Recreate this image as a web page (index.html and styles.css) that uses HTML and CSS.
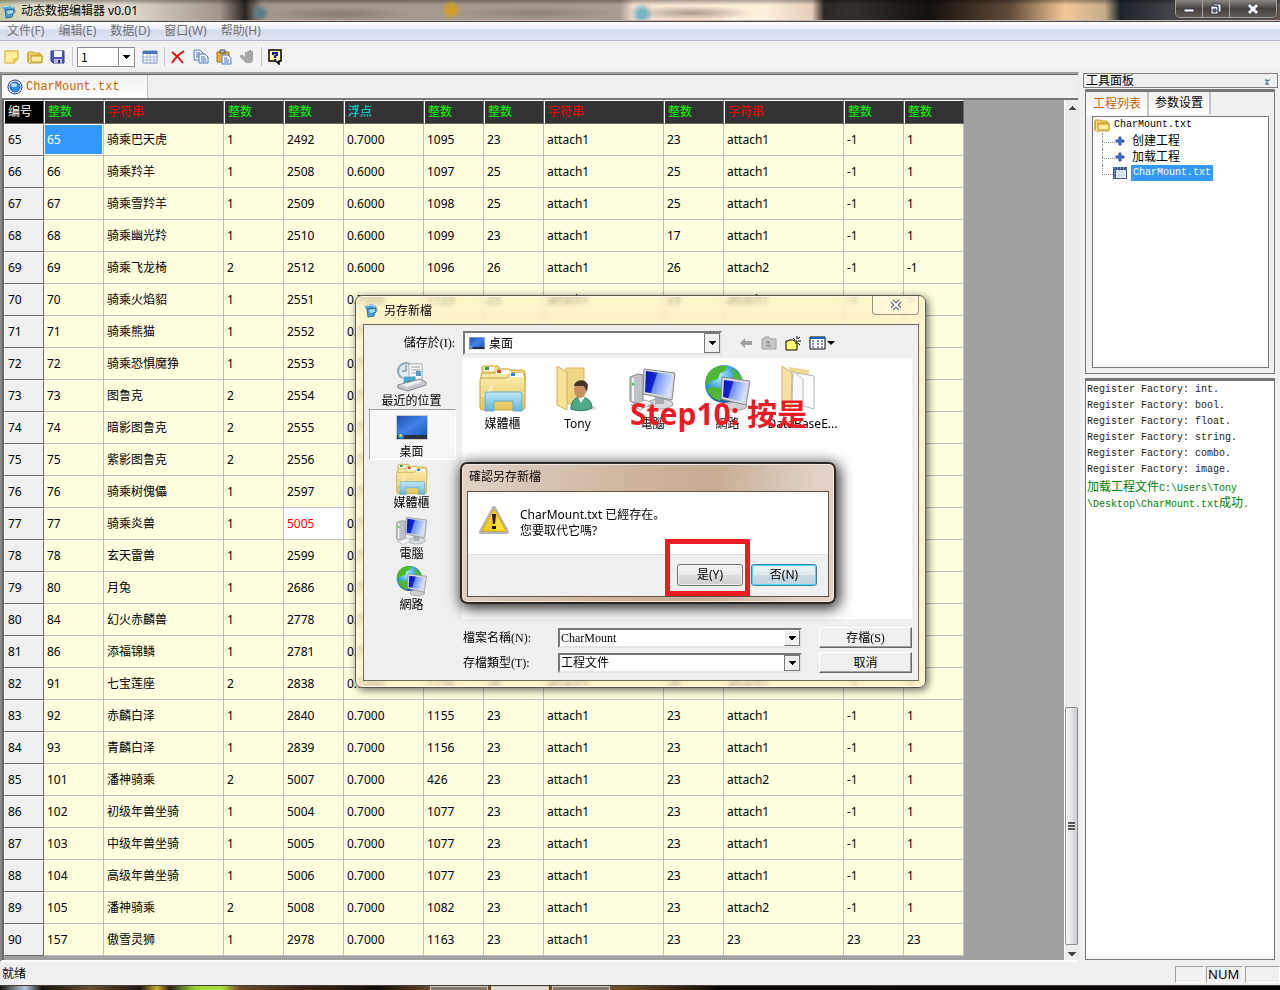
FILE: index.html
```html
<!DOCTYPE html>
<html lang="zh-CN">
<head>
<meta charset="utf-8">
<title>动态数据编辑器 v0.01</title>
<link rel="stylesheet" href="styles.css">
</head>
<body>
<svg class="defs" width="0" height="0" aria-hidden="true">
  <defs>
    <linearGradient id="gBlue" x1="0" y1="0" x2="1" y2="1"><stop offset="0" stop-color="#1d4fb0"/><stop offset=".5" stop-color="#3f83e8"/><stop offset="1" stop-color="#1f56bd"/></linearGradient>
    <linearGradient id="gScreen" x1="0" y1="0" x2="1" y2=".3"><stop offset="0" stop-color="#0a12b8"/><stop offset=".4" stop-color="#1426d2"/><stop offset=".45" stop-color="#6f8ff0"/><stop offset="1" stop-color="#d6e2ff"/></linearGradient>
    <linearGradient id="gFold" x1="0" y1="0" x2="0" y2="1"><stop offset="0" stop-color="#fbeeb0"/><stop offset="1" stop-color="#e6c659"/></linearGradient>
    <linearGradient id="gGlass" x1="0" y1="0" x2="0" y2="1"><stop offset="0" stop-color="#c4e9f6"/><stop offset="1" stop-color="#5fb4dc"/></linearGradient>
    <radialGradient id="gGlobe" cx=".4" cy=".3" r=".8"><stop offset="0" stop-color="#b4ecff"/><stop offset=".5" stop-color="#2f9ad6"/><stop offset="1" stop-color="#0a3c8c"/></radialGradient>
    <symbol id="app" viewBox="0 0 16 16"><path d="M1 4l8-2 5 3-2 2-8 1z" fill="#4b9fd0"/><path d="M4 7l9-1-2 8-6 1z" fill="#4a9fd2" stroke="#2c6f9d"/><path d="M6 8l6-1v3l-5 1z" fill="#a9d8f2"/><path d="M2 4l7-1 3 2" fill="none" stroke="#c7e7f8"/><path d="M13 7q3 1-1 4" fill="none" stroke="#2c6f9d"/></symbol>
    <symbol id="monitor" viewBox="0 0 48 48">
      <path d="M1 13l8-3 5 1v27l-9 1-4-2z" fill="#bfc3c8" stroke="#85898e"/><path d="M4 14v23" stroke="#f4f4f4" stroke-width="2"/><circle cx="4" cy="20" r="1.500" fill="#37d63a"/>
      <ellipse cx="31" cy="40" rx="13" ry="5" fill="#d9dbde" stroke="#9a9da1"/><path d="M26 33h9v7h-9z" fill="#a9adb3"/>
      <path d="M15 5l31 4-3 27-29-6z" fill="#d6d8dc" stroke="#85898e"/><path d="M17 7l27 4-3 22-25-5z" fill="url(#gScreen)"/>
      <path d="M2 41l14-5 8 3-13 7z" fill="#f1f1f1" stroke="#a6a9ad"/>
    </symbol>
    <symbol id="network" viewBox="0 0 48 48">
      <circle cx="20" cy="20" r="19" fill="url(#gGlobe)"/><path d="M5 8c5-6 13-7 18-6l-2 5-5 2-2 6-7 2-5 5c-1-6 0-10 3-14zM27 4c6 3 10 7 12 13l-7 1-4-3 2-4zM8 23l8 1 3 5-3 8c-7-2-11-7-13-12z" fill="#4eb82e"/>
      <ellipse cx="32" cy="42" rx="11" ry="4" fill="#cfd1d4" stroke="#96999d"/><path d="M18 13l28 4-4 24-25-6z" fill="#d9dadd" stroke="#85898e"/><path d="M20 16l23 3-3 19-21-5z" fill="url(#gScreen)"/>
    </symbol>
    <symbol id="library" viewBox="0 0 48 48">
      <path d="M3 9V4q0-2 2-2h14l3 4h21q3 0 3 3v8H3z" fill="#f0dc85" stroke="#c6a33c"/><path d="M2 18v-7q0-2 2-2h12l3-4h12l3 4h9q3 0 3 3v10H2z" fill="#f7e9a8" stroke="#c6a33c"/>
      <path d="M1 16q0-2 2-2h25l3-4h12q3 0 3 3v30q0 3-3 3H4q-3 0-3-3z" fill="url(#gFold)" stroke="#c6a33c"/>
      <path d="M5 3h10v4H5zM17 6h13v4H17zM31 9h13v4H31z" fill="#fff"/><path d="M6 3h4v3H6z" fill="#28a63a"/><path d="M18 6h4v3h-4z" fill="#d8432a"/><path d="M32 9h4v3h-4z" fill="#2a7fe0"/>
      <path d="M3 33l12-13-5 12zM13 17l-1 13 9 1-9 2-1 7-2-7-8-2 8-2z" fill="#fff" opacity=".6"/>
      <path d="M6 47V30q0-2 2-2h33q2 0 2 2v17h-9V37H15v10z" fill="url(#gGlass)" stroke="#62aacb"/>
    </symbol>
    <symbol id="desktop" viewBox="0 0 32 26"><path d="M0 0h32v25H0z" fill="#c8ccd2"/><path d="M1 1h30v20H1z" fill="url(#gBlue)"/><path d="M1 20h30v4H1z" fill="#27323f"/><circle cx="5" cy="21" r="3" fill="#2d8bd2"/><path d="M4 19l2 1-1 2-2-1z" fill="#ffdb4a"/></symbol>
    <symbol id="recent" viewBox="0 0 32 32"><circle cx="10" cy="10" r="8" fill="#dbe8ee" stroke="#91a5b0" stroke-width="2"/><path d="M10 4v6H6" fill="none" stroke="#5d7686"/><path d="M13 3h13v17H13z" fill="#fff" stroke="#a4a8ac"/><path d="M15 6h9M15 9h9M15 12h5" stroke="#8a97a3"/><path d="M20 10h5v5h-5z" fill="#5696c6"/><path d="M7 15h13v10H7z" fill="#48a6d4" stroke="#eee"/><path d="M8 24l5-5 7 5z" fill="#2d8f48"/><path d="M2 24l22-6 6 3v3l-18 6-10-3z" fill="#c4c7cb" stroke="#85898e"/><path d="M4 24l19-5 4 2-16 5z" fill="#eceef0"/></symbol>
    <symbol id="folder16" viewBox="0 0 16 16"><path d="M1 13V4q0-1 1-1h4l2 1h5v3" fill="#f6dc7c" stroke="#c69a1c"/><path d="M3 6h12v7q0 1-1 1H2q-1 0-1-1V4" fill="none" stroke="#c69a1c"/><path d="M4 7h11v6H4z" fill="#fdeca0" stroke="#c69a1c"/></symbol>
    <symbol id="plus" viewBox="0 0 10 10"><path d="M4 1h2v3h3v2H6v3H4V6H1V4h3z" fill="#4679cf" stroke="#2a4e9e"/></symbol>
  </defs>
</svg>

<div class="window">
  <header class="titlebar">
    <svg class="icon16"><use href="#app"/></svg>
    <h1 class="title">动态数据编辑器 v0.01</h1>
    <div class="winbtns">
      <button aria-label="最小化"><svg width="14" height="12"><path d="M2 6h10v3H2z" fill="#fff" stroke="#3a3f55"/></svg></button>
      <button aria-label="还原"><svg width="14" height="12"><path d="M4 1h8v8H9V3H4zM2 3h7v8H2z" fill="#fff" stroke="#3a3f55"/><path d="M4 6h3v3H4z" fill="#777" stroke="#3a3f55"/></svg></button>
      <button class="close" aria-label="关闭"><svg width="14" height="12"><path d="M3 2l8 8M11 2l-8 8" stroke="#3a3f55" stroke-width="5"/><path d="M3 2l8 8M11 2l-8 8" stroke="#fff" stroke-width="3"/></svg></button>
    </div>
  </header>
  <nav class="menubar">
    <button>文件(F)</button><button>编辑(E)</button><button>数据(D)</button><button>窗口(W)</button><button>帮助(H)</button>
  </nav>
  <div class="toolbar">
    <button aria-label="新建"><svg class="icon16"><path d="M1 2h13v8l-4 4H1z" fill="#fff0a0" stroke="#d9a51c"/><path d="M14 10h-4v4" fill="#ffdc66" stroke="#d9a51c"/></svg></button>
    <button aria-label="打开"><svg class="icon16"><use href="#folder16"/></svg></button>
    <button aria-label="保存"><svg class="icon16"><path d="M1 2h13v12H3l-2-2z" fill="#4a55bd" stroke="#2d3796"/><path d="M4 2h8v6H4z" fill="#f4f6ff"/><path d="M4 10h8v4H4z" fill="#b9bedb"/><path d="M8 11h2v3H8z" fill="#222a70"/></svg></button>
    <span class="sep"></span>
    <select class="num" aria-label="编号"><option>1</option></select>
    <button aria-label="表格"><svg class="icon16"><path d="M1 2h14v12H1z" fill="#fff" stroke="#6d92c9"/><path d="M1 2h14v3H1z" fill="#4477bd"/><path d="M1 8h14M1 11h14M5 5v9M8 5v9M12 5v9" stroke="#9cb6dc"/></svg></button>
    <span class="sep"></span>
    <button aria-label="删除"><svg class="icon16"><path d="M2 3c4 3 8 7 11 11M14 2C9 5 5 9 2 14" fill="none" stroke="#d80c0c" stroke-width="2"/></svg></button>
    <button aria-label="复制"><svg class="icon16"><path d="M1 1h6l3 3v7H1z" fill="#e9f1ff" stroke="#527cb8"/><path d="M6 5h6l3 3v6H6z" fill="#e9f1ff" stroke="#527cb8"/><path d="M3 4h4M3 6h3M3 8h3M8 8h4M8 10h5M8 12h5" stroke="#527cb8"/></svg></button>
    <button aria-label="粘贴"><svg class="icon16"><path d="M1 3h12v10H1z" fill="#e3ae3c" stroke="#a1701a"/><path d="M4 1h5v3H4z" fill="#bbb" stroke="#555"/><path d="M6 6h6l3 3v6H6z" fill="#eef4ff" stroke="#527cb8"/><path d="M8 9h3M8 11h5M8 13h5" stroke="#527cb8"/></svg></button>
    <button aria-label="停止"><svg class="icon16"><path d="M6 8V3h2V2h2V1h2v1h2v10l-2 2H7l-6-6V6h3z" fill="#a8a8a8"/></svg></button>
    <span class="sep"></span>
    <button aria-label="帮助"><svg class="icon16"><path d="M2 1h12v11h-2v3l-3-3H2z" fill="#fff9b0" stroke="#000" stroke-width="1.500"/><path d="M6 6V4h4v2L8 7v2M8 10v1" fill="none" stroke="#15158c" stroke-width="2"/></svg></button>
  </div>

  <main class="work">
    <section class="editor">
      <div class="tabs"><button class="tab"><svg class="icon16"><circle cx="8" cy="8" r="7" fill="#fff" stroke="#17348f"/><circle cx="8" cy="8" r="5" fill="#2e8df2" stroke="#1b4fb8"/><ellipse cx="7" cy="6" rx="3" ry="2" fill="#a9dcff"/></svg>CharMount.txt</button></div>
      <div class="gridarea">
        <div class="gridwrap"><table class="grid">
          <colgroup><col class="c40"><col class="c60"><col class="c120"><col class="c60"><col class="c60"><col class="c80"><col class="c60"><col class="c60"><col class="c120"><col class="c60"><col class="c120"><col class="c60"><col class="c60"></colgroup>
          <thead><tr><th class="corner">编号</th><th>整数</th><th class="str">字符串</th><th>整数</th><th>整数</th><th class="flt">浮点</th><th>整数</th><th>整数</th><th class="str">字符串</th><th>整数</th><th class="str">字符串</th><th>整数</th><th>整数</th></tr></thead>
          <tbody id="rows"></tbody>
        </table></div>
        <div class="scroll"><span class="up"></span><span class="space"></span><span class="thumb"><i></i></span><span class="down"></span></div>
      </div>
    </section>

    <aside class="dock">
      <div class="caption"><h2>工具面板</h2><svg width="6" height="8"><path d="M0 3h2v4M0 7h4M2 4q1-1 3-1" fill="none" stroke="#1f5c85"/></svg></div>
      <div class="panel">
        <div class="ptabs"><button class="on">工程列表</button><button>参数设置</button></div>
        <div class="tree">
          <div class="root"><svg class="icon16"><use href="#folder16"/></svg><span class="mono">CharMount.txt</span></div>
          <ul>
            <li><svg class="icon10"><use href="#plus"/></svg><span>创建工程</span></li>
            <li><svg class="icon10"><use href="#plus"/></svg><span>加载工程</span></li>
            <li class="file"><svg class="icon14" viewBox="0 0 14 12"><path d="M0 0h14v12H0z" fill="#40598f"/><path d="M3 3h10v8H3z" fill="#f0f4ff"/><path d="M3 5h10M3 8h10M6 3v8M9 3v8" stroke="#c3cee8"/><path d="M1 1h1M4 1h1M7 1h1M10 1h1M1 4h1M1 7h1M1 10h1" stroke="#c3cee8"/></svg><span class="mono sel">CharMount.txt</span></li>
          </ul>
        </div>
      </div>
      <div class="log">
        <p>Register Factory: int.</p><p>Register Factory: bool.</p><p>Register Factory: float.</p><p>Register Factory: string.</p><p>Register Factory: combo.</p><p>Register Factory: image.</p>
        <p class="ok"><span class="han">加载工程文件</span>C:\Users\Tony</p><p class="ok">\Desktop\CharMount.txt<span class="han">成功</span>.</p>
      </div>
    </aside>
  </main>

  <footer class="status"><span class="ready">就绪</span><span class="box"></span><span class="box numlock">NUM</span><span class="box last"></span></footer>
  <div class="taskbar"><span></span><span class="lit"></span><span></span></div>
</div>

<section class="save" role="dialog" aria-label="另存新檔">
  <header class="savehead"><svg class="icon16"><use href="#app"/></svg><h2>另存新檔</h2><button aria-label="關閉"><svg width="14" height="12"><path d="M3 2l8 8M11 2l-8 8" stroke="#555b66" stroke-width="4"/><path d="M3 2l8 8M11 2l-8 8" stroke="#fff" stroke-width="2"/></svg></button></header>
  <div class="savebody">
    <div class="lookrow">
      <label for="look">儲存於(I):</label>
      <div class="lookbox"><svg width="16" height="13"><use href="#desktop"/></svg><select id="look"><option>桌面</option></select></div>
      <div class="looktools">
        <button aria-label="返回"><svg width="14" height="12"><path d="M1 6l5-5v3h7v4H6v3z" fill="#a0a0a0"/></svg></button>
        <button aria-label="上一層"><svg width="16" height="14"><path d="M1 3h2l1-2h4l1 2h6v10H1z" fill="#c7c7c7" stroke="#a0a0a0"/><path d="M5 10h5M7 10V6M5 7l2-2 2 2" fill="none" stroke="#888"/></svg></button>
        <button aria-label="新資料夾"><svg width="16" height="16"><path d="M1 6h2l1-1h4l1 1h3v9H1z" fill="#ffff70" stroke="#000"/><path d="M12 1v3M10 5L8 3M15 2l-2 2M13 6h3M13 8l2 2M11 7v2" stroke="#000"/></svg></button>
        <button aria-label="檢視"><svg width="26" height="14"><path d="M1 1h15v12H1z" fill="#fff" stroke="#000"/><path d="M1 1h15v2H1z" fill="#1d60b5"/><path d="M3 5h2M8 5h2M12 5h2M3 8h2M8 8h2M12 8h2M3 11h2M8 11h2M12 11h2" stroke="#15156c"/><path d="M18 5h8l-4 4z" fill="#000"/></svg></button>
      </div>
    </div>
    <div class="browse">
      <nav class="places">
        <button><svg width="32" height="32"><use href="#recent"/></svg>最近的位置</button>
        <button class="on"><svg width="32" height="32"><use href="#desktop"/></svg>桌面</button>
        <button><svg width="32" height="32"><use href="#library"/></svg>媒體櫃</button>
        <button><svg width="32" height="32"><use href="#monitor"/></svg>電腦</button>
        <button><svg width="32" height="32"><use href="#network"/></svg>網路</button>
      </nav>
      <div class="files">
        <div class="item"><svg width="48" height="48"><use href="#library"/></svg>媒體櫃</div>
        <div class="item"><svg width="48" height="48" viewBox="0 0 48 48"><path d="M12 4h18v36H12z" fill="#eed684" stroke="#d7bb62"/><path d="M3 2l10 6v38L3 41z" fill="#f7e39a" stroke="#d0b055"/><ellipse cx="29" cy="44" rx="14" ry="3" fill="#ddd"/><path d="M17 45c0-8 4-12 10-12s11 4 11 11q-10 5-21 1z" fill="#4fa987" stroke="#2c7d60"/><path d="M24 33l3 6 4-6z" fill="#fff"/><ellipse cx="26" cy="26" rx="6" ry="8" fill="#c98f64"/><path d="M20 22c1-7 12-8 14-1l-1 7-3-6z" fill="#46352b"/></svg>Tony</div>
        <div class="item"><svg width="48" height="48"><use href="#monitor"/></svg>電腦</div>
        <div class="item"><svg width="48" height="48"><use href="#network"/></svg>網路</div>
        <div class="item"><svg width="48" height="48" viewBox="0 0 48 48"><path d="M10 3l20 3v8H10z" fill="#f0d991"/><path d="M17 9l18 3v33l-18-5z" fill="#fff" stroke="#b9b9b9"/><path d="M14 7l10 8v27l-11-2z" fill="#f9f9f9" stroke="#bbb"/><path d="M3 2l10 7-1 35-9-4z" fill="#f6e3a3" stroke="#d3b869"/></svg>DataBaseE...</div>
      </div>
    </div>
    <div class="fields">
      <label for="fname">檔案名稱(N):</label><div class="combo"><input id="fname" value="CharMount"><button class="drop" aria-label="展開"></button></div><button class="classic">存檔(S)</button>
      <label for="ftype">存檔類型(T):</label><select id="ftype" class="combo"><option>工程文件</option></select><button class="classic">取消</button>
    </div>
  </div>

  <p class="step">Step10: 按是</p>

  <section class="confirm" role="alertdialog" aria-label="確認另存新檔">
    <h2>確認另存新檔</h2>
    <div class="cbody">
      <div class="msg"><svg width="32" height="30" viewBox="0 0 32 30"><path d="M16 3l13 24H3z" fill="#f8d312" stroke="#b4b4b4" stroke-width="4" stroke-linejoin="round"/><path d="M16 4l12 22H4z" fill="#ffe034" stroke="#e2a90c" stroke-linejoin="round"/><path d="M16 4l4 8-8 14H4z" fill="#f2b507" opacity=".5"/><path d="M14 9h4l-1 10h-2zM14 21h4v3h-4z" fill="#1a1a1a"/></svg>
        <p>CharMount.txt 已經存在。<br>您要取代它嗎?</p></div>
      <div class="cbtns"><button>是(Y)</button><button class="def">否(N)</button></div>
    </div>
    <span class="mark"></span>
  </section>
</section>
<script src="app.js"></script>
</body>
</html>
```

FILE: styles.css
```css
* { box-sizing: border-box; }
body { margin: 0; position: relative; font: 12px/16px "Noto Sans", "Noto Sans CJK SC", sans-serif; color: #000; }
button, input, select { font: inherit; color: inherit; }
button { border: 0; padding: 0; background: none; }
h1, h2, p, ul { margin: 0; padding: 0; font-size: 12px; font-weight: normal; }
svg { flex: none; }
.defs { position: absolute; }
.icon16 { width: 16px; height: 16px; }
.icon14 { width: 14px; height: 12px; }
.icon10 { width: 10px; height: 10px; }
.mono { font-family: "Liberation Mono", "Noto Sans CJK SC", monospace; font-size: 10px; }

.window { display: flex; flex-direction: column; min-height: 100vh; background: #f0f0f0; }
.titlebar {
  display: flex; align-items: center; height: 22px; padding-left: 1px; gap: 4px;
  border-bottom: 1px solid #4b4441;
  box-shadow: inset 0 -1px #c9bdb5;
  background:
    radial-gradient(circle at 260px 13px, #5c7b8b 0 3px, transparent 9px),
    radial-gradient(circle at 451px 10px, #d19e2a 0 4px, transparent 10px),
    radial-gradient(ellipse 70px 7px at 340px 14px, #857a72, transparent),
    radial-gradient(ellipse 85px 7px at 535px 13px, #8d8279, transparent),
    radial-gradient(circle at 642px 14px, #79b4c6 0 4px, transparent 11px),
    radial-gradient(ellipse 60px 7px at 692px 13px, #ab9b8e, transparent),
    linear-gradient(#0005, transparent 5px),
    linear-gradient(90deg, #c8c9a0, #e4dfcd 30px, #dfd9cd 130px, #a1958b 220px, #2a2421 245px, #a3978d 262px, #a99d93 620px, #f4dfcc 634px, #fcf1dc 765px, #e6cdb9 812px, #2c2724 824px, #34302d 850px, #15100d 930px, #614b39 1010px, #f3c898 1065px, #c5ab8b 1105px, #1b2329 1120px, #4a4b50 1180px, #625750 100%);
}
.title { flex: 1; line-height: 20px; }
.winbtns { display: flex; align-self: flex-start; margin-right: 3px; border: 1px solid #a8a29c; border-top: 0; border-radius: 0 0 5px 5px; overflow: hidden; box-shadow: 0 0 0 1px #3338; }
.winbtns button { display: flex; justify-content: center; align-items: center; width: 27px; height: 17px; background: linear-gradient(#8a8683, #46413e 50%, #605955); border-right: 1px solid #aaa39d; }
.winbtns .close { width: 46px; border-right: 0; }
.menubar { display: flex; height: 19px; background: linear-gradient(#fff, #e9edf7 7px, #d5dbed 8px, #dfe4f6); border-bottom: 1px solid #b4bad0; color: #707070; }
.menubar button { padding: 0 7px; }
.toolbar { display: flex; align-items: center; height: 31px; padding: 0 4px; gap: 7px; background: #f3f3f3; border-top: 3px solid #f0f0f0; border-bottom: 3px solid #f0f0f0; }
.toolbar button { height: 16px; width: 16px; }
.sep { width: 1px; height: 19px; margin: 0 -2px 0 -1px; background: #c5c5c5; }
select {
  appearance: none; border: 1px solid #8c8c8c; border-radius: 0; padding: 0 3px;
}
.num {
  width: 58px; height: 20px; margin-left: -1px; font-family: "Noto Sans CJK SC", sans-serif;
  background:
    conic-gradient(from -45deg at 50% 100%, #000 90deg, transparent 0) right 4px center / 8px 4px no-repeat,
    linear-gradient(#8c8c8c, #8c8c8c) right 15px center / 1px 100% no-repeat, #fff;
}

.work { display: flex; flex: 1; min-height: 0; gap: 4px; }
.editor { flex: 1; min-width: 0; display: flex; flex-direction: column; border: solid; border-color: #a0a0a0 #e8e8e8 #fff #888; border-width: 2px 1px 2px 2px; box-shadow: inset 0 1px #696969; margin-bottom: 1px; }
.tabs { height: 24px; padding-top: 1px; }
.tab { display: flex; align-items: center; gap: 3px; height: 23px; width: 146px; padding-left: 5px; border-right: 1px solid #c3c3c3; background: linear-gradient(#f0f0f0, #fff); color: #c86400; font: 12px "Liberation Mono", monospace; }
.gridarea { flex: 1; display: flex; border-top: 2px solid #777; border-left: 2px solid #696969; background: #a0a0a0; }
.gridwrap { flex: 1; }
.grid { width: 960px; table-layout: fixed; border-collapse: separate; border-spacing: 0; }
.c40 { width: 40px; }
.c60 { width: 60px; }
.c80 { width: 80px; }
.c120 { width: 120px; }
.grid th, .grid td { padding: 0 0 0 3px; text-align: left; font-weight: normal; white-space: nowrap; overflow: hidden; }
.grid thead th { height: 24px; background: #333; color: #0f0; border: 1px solid; border-color: #fff #696969 #696969 #fff; }
.grid thead .str { color: #f00; }
.grid thead .flt { color: #00e5e5; }
.grid thead .corner { background: #000; color: #fff; }
.grid tbody th { height: 32px; background: #f0f0f0; border: 1px solid; border-color: #fff #696969 #696969 #fff; }
.grid td { height: 32px; background: #ffffdf; border-right: 1px solid #c0c0c0; border-bottom: 1px solid #c0c0c0; }
.grid .picked { background: #3399ff; color: #fff; box-shadow: inset 0 0 0 1px #fff; }
.grid .changed { background: #fff; color: #f00; }
.scroll { display: flex; flex-direction: column; width: 14px; background: #ececec; border-left: 1px solid #fff; align-items: center; }
.up, .down { height: 15px; width: 8px; }
.up { background: conic-gradient(from 135deg at 50% 0, #444 90deg, transparent 0) 0 6px / 8px 4px no-repeat; }
.down { background: conic-gradient(from -45deg at 50% 100%, #444 90deg, transparent 0) 0 7px / 8px 4px no-repeat; }
.space { flex: 592; }
.thumb { flex: 236; width: 100%; display: flex; align-items: center; justify-content: center; border: 1px solid #8e8e8e; border-radius: 2px; background: linear-gradient(90deg, #f8f8f8, #e4e4e6 50%, #c9cad0); }
.thumb i { width: 7px; height: 8px; background: repeating-linear-gradient(#555 0 2px, #eee 2px 3px); }

.dock { width: 197px; display: flex; flex-direction: column; padding: 1px 5px 3px 2px; }
.caption { display: flex; justify-content: space-between; align-items: center; height: 15px; margin: 0 -3px 0 -2px; padding: 0 6px 0 2px; border: 1px solid #7f7f7f; }
.panel { height: 285px; border: 1px solid #777; border-top-width: 3px; padding: 0 5px 5px 6px; display: flex; flex-direction: column; margin-top: 1px; }
.ptabs { display: flex; height: 24px; margin-left: -5px; }
.ptabs button { width: 62px; height: 22px; background: linear-gradient(#f0f0f0, #fff); border-right: 2px solid #c3c3c3; }
.ptabs .on { height: 24px; color: #c86400; }
.tree { flex: 1; background: #fff; border: 1px solid #777; padding: 0 1px; }
.root, .tree li { display: flex; align-items: center; height: 16px; gap: 4px; }
.tree ul { list-style: none; margin-left: 8px; }
.tree li { position: relative; padding-left: 13px; gap: 7px; }
.tree li::before { content: ""; position: absolute; left: 0; top: 0; width: 12px; height: 9px; border: dotted #888; border-width: 0 0 1px 1px; }
.tree li:not(:last-child)::after { content: ""; position: absolute; left: 0; top: 8px; height: 8px; border-left: 1px dotted #888; }
.tree .file { padding-left: 11px; gap: 4px; }
.sel { background: #3399ff; color: #fff; padding: 0 2px; }
.log { flex: 1; margin-top: 4px; padding: 1px; background: #fff; border: 1px solid #777; border-top-width: 3px; }
.log p { height: 16px; font: 10px/16px "Liberation Mono", monospace; color: #222; white-space: nowrap; }
.log .ok { color: #008000; }
.han { font-family: "Noto Sans CJK SC", sans-serif; font-size: 12px; }

.status { display: flex; align-items: center; height: 22px; padding-left: 2px; gap: 2px; }
.ready { flex: 1; }
.box { width: 29px; height: 17px; border: 1px solid; border-color: #a0a0a0 #fff #fff #a0a0a0; }
.numlock { width: 37px; padding-left: 1px; font-size: 13px; line-height: 15px; }
.last { width: 35px; }
.taskbar { display: flex; gap: 3px; height: 5px; padding-left: 430px; border-top: 1px solid #443c36; background: linear-gradient(90deg, #1a1510, #b5cbe0 25px, #14100c 42px, #6b5030 90px, #1a1510 140px, #c6b02b 157px, #2a2014 170px, #9cd635 195px, #a7e03a 222px, #6b4a25 240px, #3c2917 300px, #120d09 380px, #6b4b28 430px, #705026 620px, #0d0907 720px, #050404 100%); }
.taskbar span { width: 58px; background: #85796f; border: 1px solid #d0c7bc; border-bottom: 0; }
.taskbar .lit { background: #e2ddd6; }

.save {
  position: absolute; left: 355px; top: 295px; width: 571px; padding: 0 6px 6px 7px;
  border: 1px solid #59554a; border-radius: 7px; background: #fff0c0a8; backdrop-filter: blur(2px);
  box-shadow: inset 0 0 0 1px #fffbe6, 2px 2px 8px #0009;
  font-family: "Noto Sans CJK TC", sans-serif;
}
.savehead { display: flex; height: 28px; gap: 5px; align-items: center; }
.savehead h2 { flex: 1; }
.savehead button { align-self: flex-start; display: flex; justify-content: center; align-items: center; width: 47px; height: 19px; border: 1px solid #9b9480; border-top: 0; border-radius: 0 0 4px 4px; background: #fff4; }
.savebody { background: #f0f0f0; border: 1px solid #6d6a5d; padding: 6px 6px 7px 5px; }
.lookrow { display: flex; height: 24px; align-items: center; }
.lookrow label { width: 94px; padding-right: 8px; text-align: right; font-family: "Liberation Serif", "Noto Sans CJK TC", serif; }
.lookbox { display: flex; align-items: center; width: 259px; height: 24px; padding-left: 4px; background: #fff; border: 2px solid; border-color: #777 #e5e5e5 #e5e5e5 #777; }
.lookbox select { flex: 1; height: 20px; border: 0; padding-left: 4px; }
.lookbox select, select.combo {
  background:
    conic-gradient(from -45deg at 50% 100%, #000 90deg, transparent 0) right 4px center / 8px 4px no-repeat,
    linear-gradient(#f0f0f0, #f0f0f0) right 1px center / 14px calc(100% - 2px) no-repeat,
    linear-gradient(#777, #777) right center / 16px 100% no-repeat, #fff;
}
.looktools { display: flex; align-items: center; gap: 8px; margin-left: 17px; height: 16px; }
.looktools button { height: 16px; display: flex; align-items: center; }
.browse { display: flex; gap: 6px; margin-top: 3px; }
.places { display: flex; flex-direction: column; width: 87px; }
.places button { display: flex; flex-direction: column; align-items: center; height: 51px; padding: 2px 2px 0 0; line-height: 14px; border: 1px solid transparent; }
.places .on { background: repeating-conic-gradient(#fff 0 25%, #f0f0f0 0 50%) 0 0 / 2px 2px; border-color: #a0a0a0 #fff #fff #a0a0a0; }
.files { flex: 1; display: flex; height: 261px; background: #fff; padding: 6px 0 0 3px; }
.item { width: 75px; text-align: center; line-height: 16px; font-family: "Noto Sans", "Noto Sans CJK TC", sans-serif; }
.item svg { display: block; margin: 0 auto 4px; }
.fields { display: grid; grid-template-columns: 95px 261px 93px; row-gap: 4px; justify-content: end; align-items: center; margin-top: 8px; font-family: "Liberation Serif", "Noto Sans CJK TC", serif; }
.combo { display: flex; width: 244px; height: 20px; background: #fff; border: 2px solid; border-color: #777 #e5e5e5 #e5e5e5 #777; }
.combo input { flex: 1; min-width: 0; border: 0; padding: 0 1px; background: none; }
select.combo { padding: 0 1px; }
.drop { width: 16px; border: 1px solid #777; border-color: #fff #777 #777 #fff; background: conic-gradient(from -45deg at 50% 100%, #000 90deg, transparent 0) center / 8px 4px no-repeat #f0f0f0; }
.classic { height: 21px; background: #f0f0f0; border: 1px solid; border-color: #fff #696969 #696969 #fff; box-shadow: inset -1px -1px #a0a0a0; }

.step { position: absolute; left: 274px; top: 98px; font: bold 30px/40px "Noto Sans", "Noto Sans CJK TC", sans-serif; color: #ed1c24; white-space: nowrap; }
.confirm {
  position: absolute; left: 104px; top: 166px; width: 376px; padding: 0 5px 5px;
  border: 2px solid #2c2622; border-radius: 7px; background: linear-gradient(100deg, #e2d2c5, #cdb39c 45%, #c8ad95 65%, #e1d2c5 90%);
  box-shadow: inset 0 0 0 1px #f2e8df, 2px 3px 14px 2px #000c;
  font-family: "Noto Sans", "Noto Sans CJK TC", sans-serif;
}
.confirm h2 { line-height: 26px; height: 27px; padding-left: 2px; }
.cbody { border: 1px solid #5e5249; background: #f0f0f0; }
.msg { display: flex; gap: 10px; height: 63px; padding: 13px 10px 0; background: #fff; border-bottom: 1px solid #dfdfdf; }
.msg p { padding-top: 2px; }
.cbtns { display: flex; justify-content: flex-end; gap: 8px; padding: 9px 11px 10px; }
.cbtns button { width: 66px; height: 22px; border: 1px solid #707070; border-radius: 3px; background: linear-gradient(#f2f2f2, #ebebeb 50%, #ddd 50%, #cfcfcf); box-shadow: inset 0 0 0 1px #fffa; }
.cbtns .def { border-color: #3c7fb1; box-shadow: inset 0 0 0 1px #48d8fb; background: linear-gradient(#eef5f8, #dce9ef 50%, #c8dae4 50%, #c3d5e0); }
.mark { position: absolute; left: 203px; top: 75px; width: 85px; height: 57px; border: 5px solid #ed1c24; pointer-events: none; }
```

FILE: app.js
```js
const data = `65|65|骑乘巴天虎|1|2492|0.7000|1095|23|attach1|23|attach1|-1|1
66|66|骑乘羚羊|1|2508|0.6000|1097|25|attach1|25|attach1|-1|1
67|67|骑乘雪羚羊|1|2509|0.6000|1098|25|attach1|25|attach1|-1|1
68|68|骑乘幽光羚|1|2510|0.6000|1099|23|attach1|17|attach1|-1|1
69|69|骑乘飞龙椅|2|2512|0.6000|1096|26|attach1|26|attach2|-1|-1
70|70|骑乘火焰貂|1|2551|0.7000|1123|23|attach1|23|attach1|-1|1
71|71|骑乘熊猫|1|2552|0.7000
72|72|骑乘恐惧魔狰|1|2553|0.7000
73|73|图鲁克|2|2554|0.7000
74|74|暗影图鲁克|2|2555|0.7000
75|75|紫影图鲁克|2|2556|0.7000
76|76|骑乘树傀儡|1|2597|0.7000
77|77|骑乘炎兽|1|5005|0.7000
78|78|玄天雷兽|1|2599|0.7000
79|80|月兔|1|2686|0.7000
80|84|幻火赤麟兽|1|2778|0.7000
81|86|添福锦鳞|1|2781|0.7000
82|91|七宝莲座|2|2838|0.7000|1156|26|attach1|26|attach1|-1|1
83|92|赤麟白泽|1|2840|0.7000|1155|23|attach1|23|attach1|-1|1
84|93|青麟白泽|1|2839|0.7000|1156|23|attach1|23|attach1|-1|1
85|101|潘神骑乘|2|5007|0.7000|426|23|attach1|23|attach2|-1|1
86|102|初级年兽坐骑|1|5004|0.7000|1077|23|attach1|23|attach1|-1|1
87|103|中级年兽坐骑|1|5005|0.7000|1077|23|attach1|23|attach1|-1|1
88|104|高级年兽坐骑|1|5006|0.7000|1077|23|attach1|23|attach1|-1|1
89|105|潘神骑乘|2|5008|0.7000|1082|23|attach1|23|attach2|-1|1
90|157|傲雪灵狮|1|2978|0.7000|1163|23|attach1|23|23|23|23`;

const body = document.getElementById("rows");
for (const line of data.split("\n")) {
  const values = line.split("|");
  const row = body.insertRow();
  for (let i = 0; i < 13; i++) {
    const cell = document.createElement(i ? "td" : "th");
    cell.textContent = values[i] || "";
    if (values[0] === "65" && i === 1) cell.className = "picked";
    if (values[0] === "77" && i === 4) cell.className = "changed";
    row.append(cell);
  }
}
```
